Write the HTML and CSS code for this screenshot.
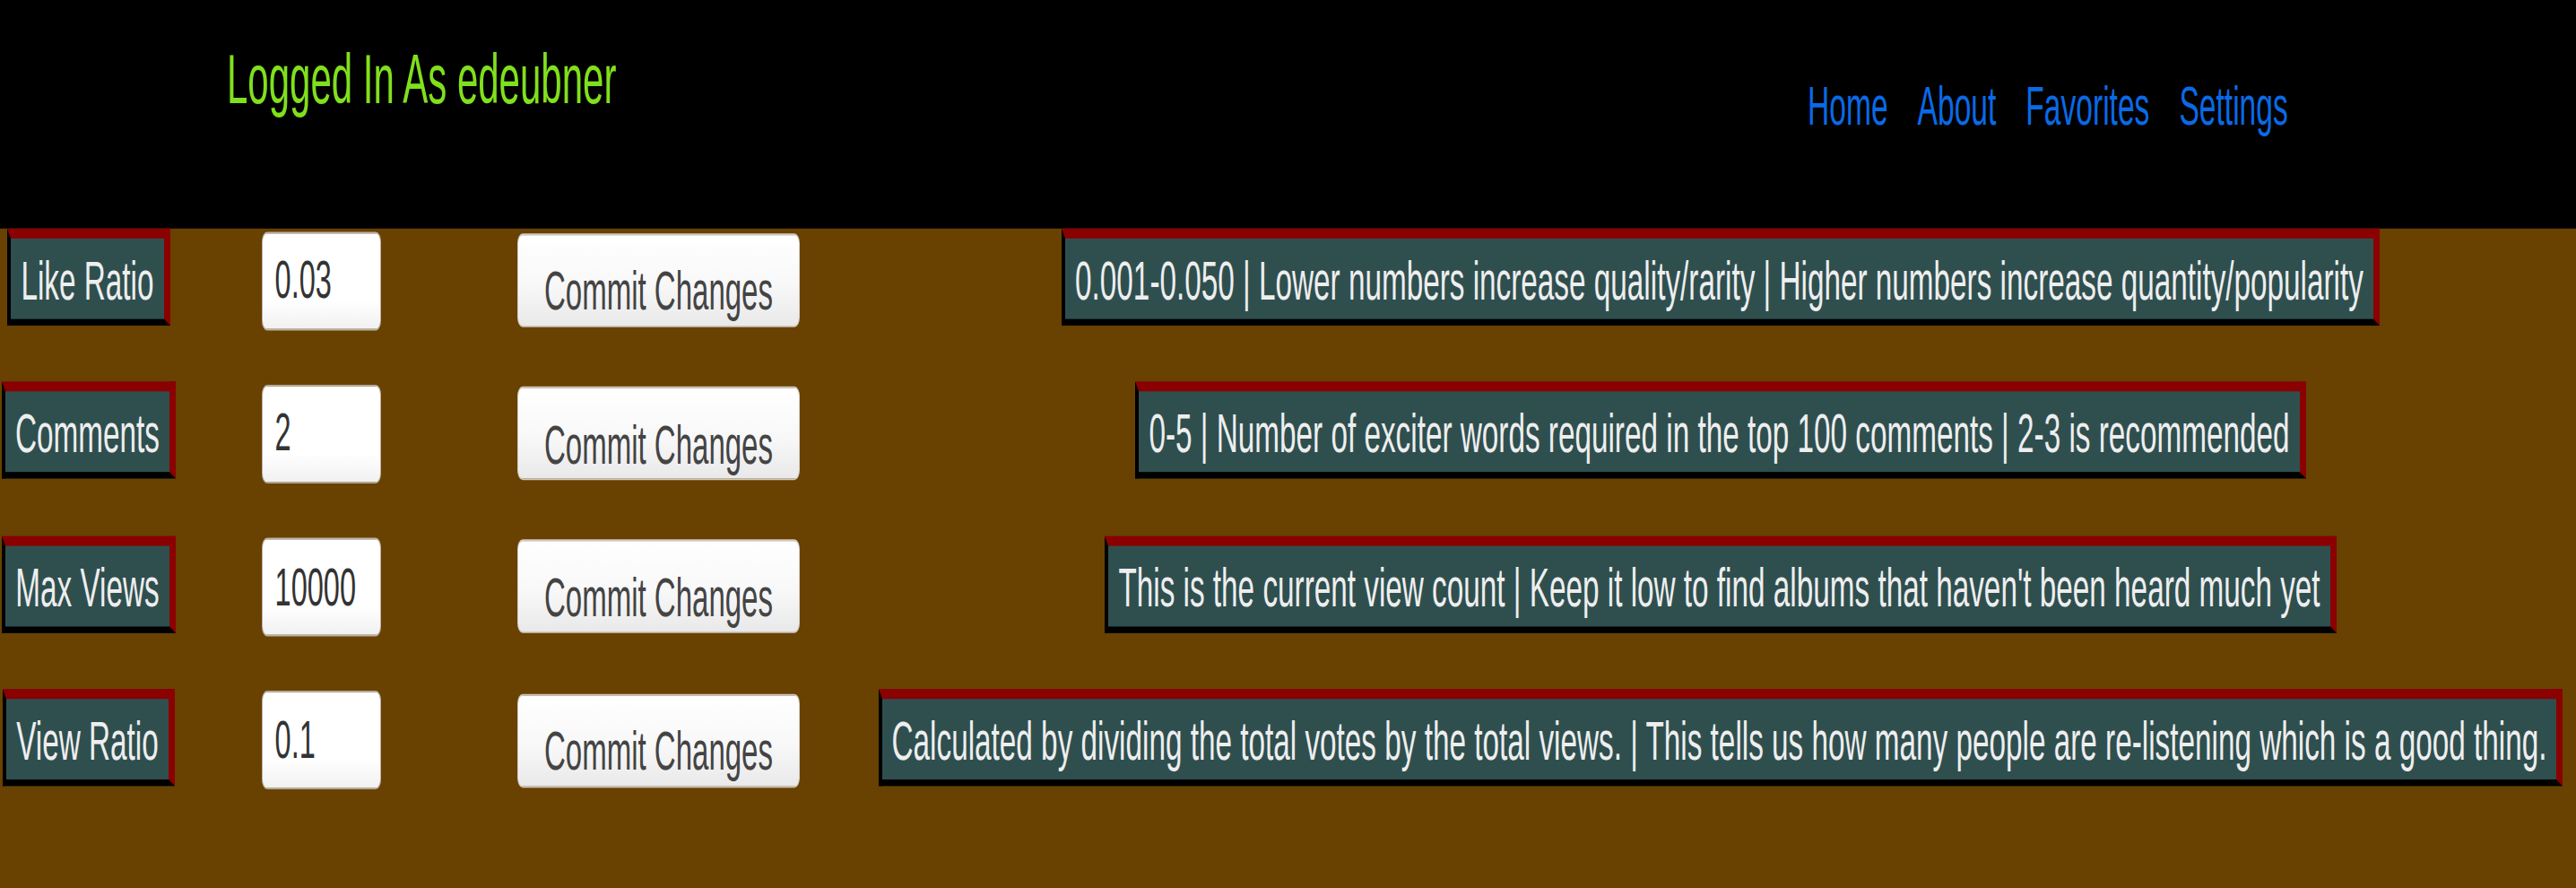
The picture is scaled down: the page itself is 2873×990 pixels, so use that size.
FILE: index.html
```html
<!DOCTYPE html>
<html lang="en">
<head>
<meta charset="utf-8">
<title>Settings</title>
<link rel="stylesheet" href="styles.css">
</head>
<body>
<div class="page">
  <header class="topbar">
    <div class="user">Logged In As edeubner</div>
    <nav class="nav">
      <a href="#">Home</a>
      <a href="#">About</a>
      <a href="#">Favorites</a>
      <a href="#">Settings</a>
    </nav>
  </header>
  <main class="settings">
    <div class="label">Like Ratio</div>
    <input class="field" type="text" value="0.03">
    <button class="commit" type="button">Commit Changes</button>
    <div class="desc">0.001-0.050 | Lower numbers increase quality/rarity | Higher numbers increase quantity/popularity</div>

    <div class="label">Comments</div>
    <input class="field" type="text" value="2">
    <button class="commit" type="button">Commit Changes</button>
    <div class="desc">0-5 | Number of exciter words required in the top 100 comments | 2-3 is recommended</div>

    <div class="label">Max Views</div>
    <input class="field" type="text" value="10000">
    <button class="commit" type="button">Commit Changes</button>
    <div class="desc">This is the current view count | Keep it low to find albums that haven't been heard much yet</div>

    <div class="label">View Ratio</div>
    <input class="field" type="text" value="0.1">
    <button class="commit" type="button">Commit Changes</button>
    <div class="desc">Calculated by dividing the total votes by the total views. | This tells us how many people are re-listening which is a good thing.</div>
  </main>
</div>
</body>
</html>
```

FILE: styles.css
```css
html {
  margin: 0;
  padding: 0;
  background: #694100;
  overflow: hidden;
}

body {
  margin: 0;
  padding: 0;
  height: 990px;
  background: #694100;
  font-family: "Liberation Sans", Arial, sans-serif;
}

.page {
  width: 2873px;
  height: 540px;
  transform: scaleY(1.8333);
  transform-origin: 0 0;
}

.topbar {
  height: 138.5px;
  background: #000;
  display: grid;
  grid-template-columns: 2016px 1fr;
  align-items: start;
}

.user {
  padding: 24.5px 0 0 253px;
  font-size: 42px;
  line-height: normal;
  color: #80e01c;
  white-space: nowrap;
}

.nav {
  display: flex;
  gap: 33px;
  padding-top: 46px;
  font-size: 33.6px;
  line-height: normal;
}

.nav a {
  color: #0a6ae6;
  text-decoration: none;
}

.settings {
  display: grid;
  grid-template-columns: 198px 321px 431px 1938px;
  grid-auto-rows: 62px;
  row-gap: 31.3px;
  justify-items: center;
  align-items: start;
  margin-top: 0.5px;
}

.label,
.desc {
  background: #2f4f4f;
  color: #eeeeee;
  font-size: 33.3px;
  line-height: 38px;
  white-space: nowrap;
  border-style: solid;
  border-width: 6px 7px 4px 4px;
  border-color: #8b0000 #8b0000 #000 #000;
  padding: 7px 11px 4px 11px;
}

.field {
  box-sizing: border-box;
  width: 133px;
  height: 60px;
  margin: 1.6px 0 0 0;
  padding: 0 0 0 13.6px;
  border: 1px solid #b9b2a8;
  border-radius: 6px;
  background: linear-gradient(#ffffff 70%, #f1f1f1);
  font-family: "Liberation Sans", Arial, sans-serif;
  font-size: 32.5px;
  color: #333;
}

.commit {
  box-sizing: border-box;
  width: 315px;
  height: 57px;
  margin: 2.8px 0 0 0;
  padding: 14px 0 0 0;
  border: 1px solid #cfcac2;
  border-radius: 6px;
  background: linear-gradient(#ffffff, #f8f8f8 55%, #e9e9e9);
  font-family: "Liberation Sans", Arial, sans-serif;
  font-size: 33px;
  line-height: normal;
  color: #444;
}
```
